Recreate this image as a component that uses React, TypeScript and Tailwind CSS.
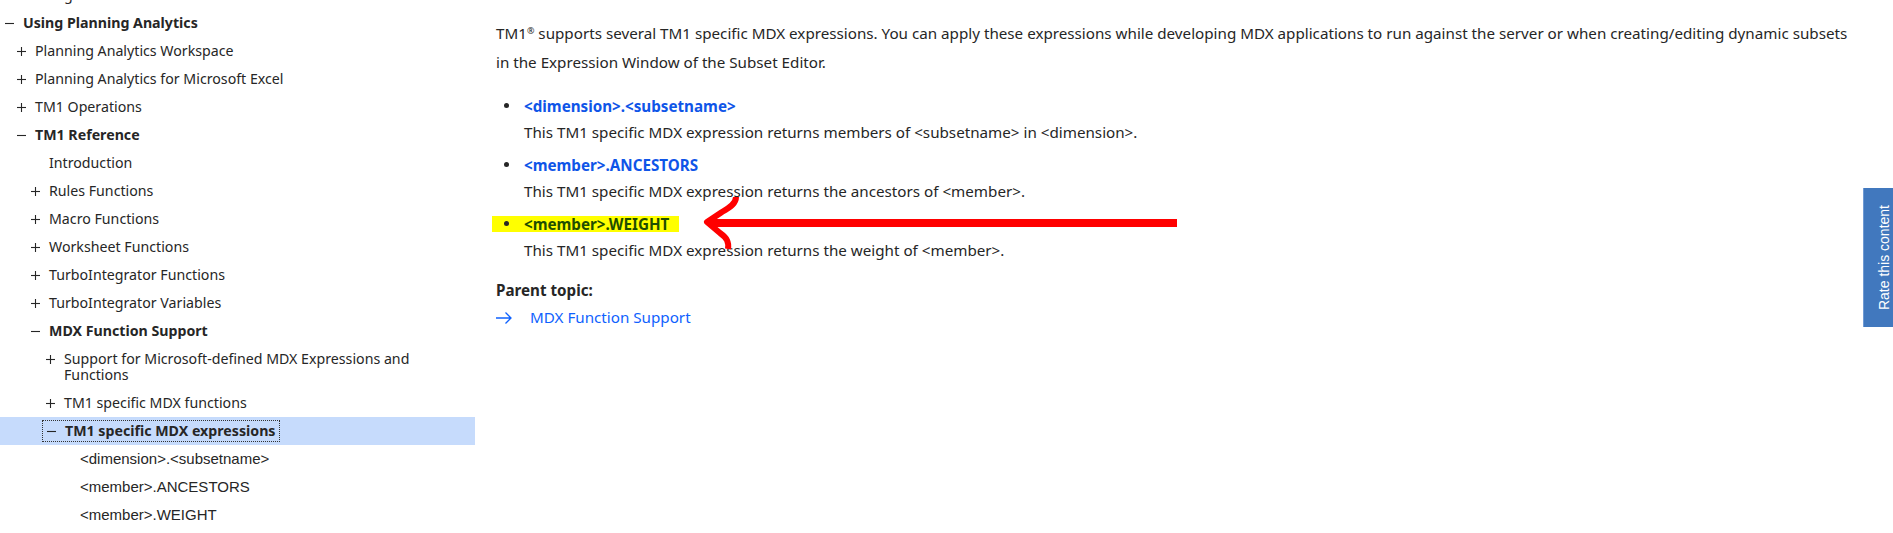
import React from "react";

type Item = {
  text: string;
  level: number;
  icon?: "plus" | "minus";
  bold?: boolean;
  leaf?: boolean;
  selected?: boolean;
};

const items: Item[] = [
  { text: "Getting started", level: 0, icon: "plus" },
  { text: "Using Planning Analytics", level: 0, icon: "minus", bold: true },
  { text: "Planning Analytics Workspace", level: 1, icon: "plus" },
  { text: "Planning Analytics for Microsoft Excel", level: 1, icon: "plus" },
  { text: "TM1 Operations", level: 1, icon: "plus" },
  { text: "TM1 Reference", level: 1, icon: "minus", bold: true },
  { text: "Introduction", level: 2 },
  { text: "Rules Functions", level: 2, icon: "plus" },
  { text: "Macro Functions", level: 2, icon: "plus" },
  { text: "Worksheet Functions", level: 2, icon: "plus" },
  { text: "TurboIntegrator Functions", level: 2, icon: "plus" },
  { text: "TurboIntegrator Variables", level: 2, icon: "plus" },
  { text: "MDX Function Support", level: 2, icon: "minus", bold: true },
  { text: "Support for Microsoft-defined MDX Expressions and Functions", level: 3, icon: "plus" },
  { text: "TM1 specific MDX functions", level: 3, icon: "plus" },
  { text: "TM1 specific MDX expressions", level: 3, icon: "minus", bold: true, selected: true },
  { text: "<dimension>.<subsetname>", level: 4, leaf: true },
  { text: "<member>.ANCESTORS", level: 4, leaf: true },
  { text: "<member>.WEIGHT", level: 4, leaf: true },
];

// padding-left per tree level
const levelPad = ["pl-[5px]", "pl-[17px]", "pl-[31px]", "pl-[46px]", "pl-[62px]"];

const TreeIcon = ({ kind }: { kind?: "plus" | "minus" }) => (
  <span className="flex h-[16px] w-[18px] shrink-0 items-center">
    {kind ? (
      <svg width="9" height="9" viewBox="0 0 9 9" className="text-[#262626]">
        <path d="M0 4.5h9" stroke="currentColor" strokeWidth="1.1" />
        {kind === "plus" ? <path d="M4.5 0v9" stroke="currentColor" strokeWidth="1.1" /> : null}
      </svg>
    ) : null}
  </span>
);

const TreeRow = ({ item }: { item: Item }) => {
  const label = (
    <span
      className={`max-w-[372px] leading-[16px] ${
        item.leaf
          ? "font-['Liberation_Sans',Arial,sans-serif] text-[15px]"
          : "font-['Noto_Sans',sans-serif] text-[14.2px]"
      } ${item.bold ? "font-bold" : ""}`}
    >
      {item.text}
    </span>
  );

  if (item.selected) {
    return (
      <div className="flex items-center bg-[#c6dbfc] py-[4px] pl-[43px]">
        <span className="flex items-start px-[4px] py-[2px] outline-1 outline-dotted outline-[#333]">
          <TreeIcon kind={item.icon} />
          {label}
        </span>
      </div>
    );
  }

  return (
    <div className={`flex items-start py-[6px] ${levelPad[item.level]}`}>
      <TreeIcon kind={item.icon} />
      {label}
    </div>
  );
};

const entries = [
  {
    title: "<dimension>.<subsetname>",
    desc: "This TM1 specific MDX expression returns members of <subsetname> in <dimension>.",
  },
  {
    title: "<member>.ANCESTORS",
    desc: "This TM1 specific MDX expression returns the ancestors of <member>.",
  },
  {
    title: "<member>.WEIGHT",
    desc: "This TM1 specific MDX expression returns the weight of <member>.",
    marked: true,
  },
];

export default function App() {
  return (
    <div className="relative flex h-[533px] w-full overflow-hidden bg-white text-[#262626]">
      <aside className="mt-[-19px] w-[475px] shrink-0">
        {items.map((it) => (
          <TreeRow key={it.text} item={it} />
        ))}
      </aside>

      <main className="flex-1 pl-[21px] pt-[20px] font-['Noto_Sans',sans-serif] text-[15.2px] leading-[27px]">
        <p className="w-[1360px]">
          TM1<span className="relative top-[-5px] text-[9px]">®</span> supports several TM1 specific MDX expressions.
          You can apply these expressions while developing MDX applications to run against the server or when
          creating/editing dynamic subsets in the Expression Window of the Subset Editor.
        </p>

        <ul className="mt-[16px]">
          {entries.map((e) => (
            <li key={e.title} className="mb-[5px]">
              <div className="flex h-[27px] items-center">
                <div
                  className={`-ml-[4px] flex h-[16px] items-center pl-[4px] pr-[10px] font-bold leading-[16px] ${
                    e.marked ? "bg-[#ffff00] text-[#1f4d00]" : "text-[#0f55e8]"
                  }`}
                >
                  <span className="flex w-[28px] shrink-0 pl-[8px]">
                    <span className="h-[5px] w-[5px] rounded-full bg-[#262626]" />
                  </span>
                  <span>{e.title}</span>
                </div>
              </div>
              <div className="pl-[28px]">{e.desc}</div>
            </li>
          ))}
        </ul>

        <div className="mt-[13px] font-bold">Parent topic:</div>
        <a className="flex items-center gap-[18px] leading-[27px] text-[#0f62fe]">
          <svg width="16" height="12" viewBox="0 0 16 12" fill="none">
            <path d="M0 6h15M9.5 0.5L15 6l-5.5 5.5" stroke="currentColor" strokeWidth="1.3" />
          </svg>
          MDX Function Support
        </a>
      </main>

      {/* hand-drawn annotation */}
      <svg className="pointer-events-none absolute left-0 top-0" width="1893" height="533">
        <rect x="711" y="219" width="466" height="8" fill="#ff0000" />
        <path
          d="M736 197 C736 203 731 207 722 212 L707 222 L720 233 C727 238 729 242 728 249"
          stroke="#ff0000"
          strokeWidth="6"
          fill="none"
          strokeLinejoin="round"
        />
      </svg>

      <div className="absolute right-0 top-[188px] flex h-[139px] w-[30px] items-center justify-end border-l border-[#6f9ad4] bg-[#4178be] pr-[1px]">
        <span className="rotate-180 font-['Liberation_Sans',Arial,sans-serif] text-[14px] leading-[16px] text-white [writing-mode:vertical-rl]">
          Rate this content
        </span>
      </div>
    </div>
  );
}
